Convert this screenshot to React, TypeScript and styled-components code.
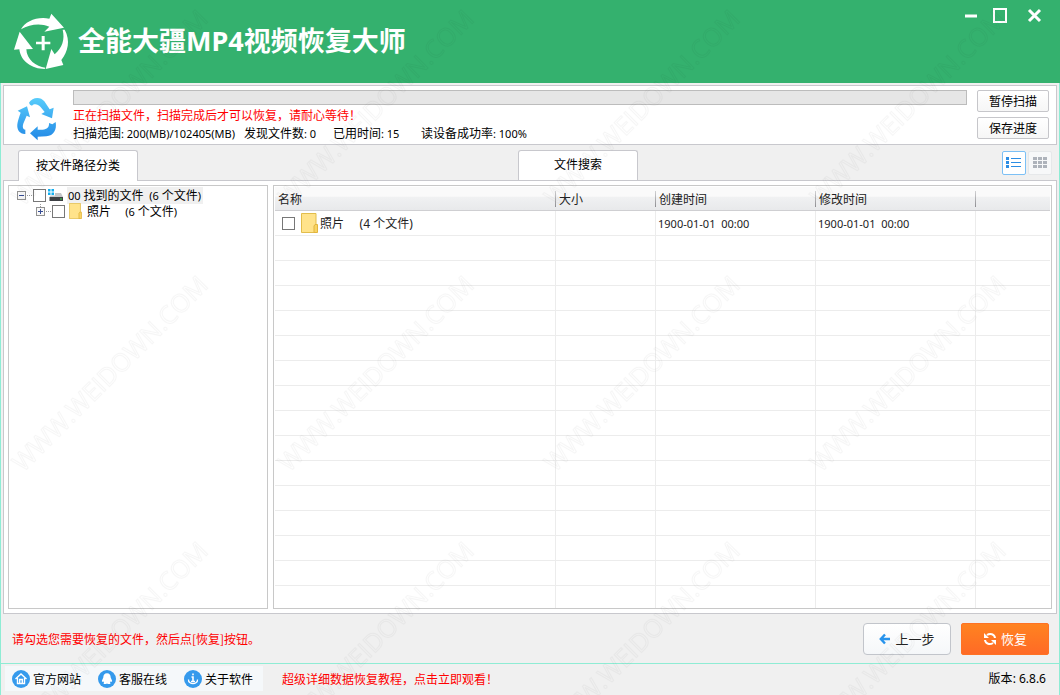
import React from "react";
import styled, { createGlobalStyle } from "styled-components";

const GlobalStyle = createGlobalStyle`
  * { box-sizing: border-box; }
  body {
    margin: 0;
    background: #f0f0f0;
    color: #000;
    font: 12px/16px "Noto Sans CJK SC", sans-serif;
  }
  button, input { font: inherit; margin: 0; padding: 0; }
`;

const Window = styled.div`
  position: relative;
  display: flex;
  flex-direction: column;
  height: 100vh;
  min-height: 480px;
  overflow: hidden;
`;

const TitleBar = styled.header`
  display: flex;
  justify-content: space-between;
  height: 83px;
  flex: none;
  padding: 0 15px 0 9px;
  background: #34b16e;
  color: #fff;
`;

const Brand = styled.div`
  display: flex;
  align-items: center;
  gap: 5px;
  padding-bottom: 2px;
`;

const Title = styled.h1`
  margin: 0;
  font: bold 27px/40px "Noto Sans", "Noto Sans CJK SC", sans-serif;
`;

const WindowControls = styled.div`
  display: flex;
  gap: 13px;
  padding-top: 6px;
`;

const ControlButton = styled.button`
  display: flex;
  align-items: center;
  justify-content: center;
  width: 20px;
  height: 20px;
  border: 0;
  background: none;
  color: #fff;
`;

const Frame = styled.div`
  display: flex;
  flex: 1;
  flex-direction: column;
  min-height: 0;
  border: solid #8eecd4;
  border-width: 0 1px;
`;

const ScanPanel = styled.section`
  display: flex;
  flex: none;
  margin: 2px 2px 0;
  padding: 4px 7px 0 6px;
  border: 1px solid #c8c8cd;
  background: #fff;
`;

const ScanInfo = styled.div`
  flex: 1;
  min-width: 0;
  margin-left: 9px;
`;

const ScanIcon = styled.svg`
  flex: none;
  width: 54px;
  height: 54px;
`;

const ScanProgress = styled.progress`
  display: block;
  width: 100%;
  height: 15px;
  margin-bottom: 1px;
  border: 1px solid #bcbcbc;
  background: #e6e6e6;
  appearance: none;
  &::-webkit-progress-bar { background: #e6e6e6; }
  &::-webkit-progress-value { background: #34b16e; }
`;

const Notice = styled.p`
  margin: 0;
  color: #f00;
  line-height: 18px;
`;

const Stats = styled.div`
  display: grid;
  grid-template-columns: 171px 89px 88px 1fr;
  line-height: 18px;
  white-space: nowrap;
`;

const Latin = styled.span<{ $size?: number }>`
  font-family: "Noto Sans", sans-serif;
  font-size: ${(p) => p.$size ?? 11}px;
  white-space: pre;
`;

const ScanButtons = styled.div`
  display: flex;
  flex-direction: column;
  gap: 5px;
  margin-left: 10px;
`;

const SmallButton = styled.button`
  width: 72px;
  height: 22px;
  border: 1px solid #c6c6ca;
  border-radius: 2px;
  background: linear-gradient(#fff, #f6f6f6);
  color: #000;
  line-height: 18px;
`;

const TabBar = styled.div`
  position: relative;
  display: flex;
  flex: none;
  margin: 5px 7px -1px 17px;
`;

const Tab = styled.button<{ $active?: boolean; $gap?: number }>`
  width: 120px;
  height: ${(p) => (p.$active ? 31 : 30)}px;
  margin-left: ${(p) => p.$gap ?? 0}px;
  padding-bottom: 3px;
  border: 1px solid #c8c8cd;
  border-bottom: 0;
  border-radius: 3px 3px 0 0;
  background: #fff;
  color: #000;
`;

const ViewSwitch = styled.div`
  display: flex;
  gap: 2px;
  margin: 1px 0 0 auto;
`;

const ViewButton = styled.button<{ $active?: boolean }>`
  display: flex;
  align-items: center;
  justify-content: center;
  width: 24px;
  height: 24px;
  border: 1px solid ${(p) => (p.$active ? "#7cc0f5" : "#e6e8ea")};
  border-radius: 2px;
  background: ${(p) => (p.$active ? "#fff" : "#f7f8f9")};
  color: ${(p) => (p.$active ? "#2b8de4" : "#aeb3bb")};
`;

const Workspace = styled.main`
  display: flex;
  flex: 1;
  gap: 5px;
  min-height: 0;
  margin: 0 2px;
  padding: 4px;
  border: 1px solid #c8c8cd;
  background: #fff;
`;

const TreePane = styled.nav`
  flex: none;
  width: 260px;
  padding: 1px 8px;
  border: 1px solid #c8c8c8;
  overflow: hidden;
`;

const TreeRow = styled.div<{ $level: number }>`
  display: flex;
  align-items: center;
  height: 16px;
  padding-left: ${(p) => p.$level * 19}px;
  white-space: nowrap;
`;

const Expander = styled.button`
  display: flex;
  flex: none;
  width: 16px;
  height: 15px;
  border: 0;
  background: none;
`;

const Check = styled.input`
  flex: none;
  width: 13px;
  height: 13px;
  border: 1px solid #777;
  background: #fff;
  appearance: none;
`;

const TreeLabel = styled.label`
  display: flex;
  align-items: center;
  gap: 4px;
  height: 16px;
`;

const TreeName = styled.span<{ $selected?: boolean }>`
  padding: 0 2px 0 1px;
  background: ${(p) => (p.$selected ? "#f0f0f0" : "transparent")};
  white-space: pre;
`;

const RowIcon = styled.svg<{ $gap: number }>`
  flex: none;
  margin-left: ${(p) => p.$gap}px;
`;

const ListPane = styled.section`
  flex: 1;
  min-width: 0;
  padding: 1px;
  border: 1px solid #c8c8c8;
  overflow: hidden;
`;

const FileTable = styled.table`
  width: 100%;
  border-collapse: separate;
  border-spacing: 0;
  table-layout: fixed;
  color: #222;
`;

const HeadCell = styled.th`
  height: 24px;
  padding: 0 3px;
  border-bottom: 1px solid #cfcfd2;
  background:
    linear-gradient(#d0d0d2, #8e8e92) right 4px / 1px 16px no-repeat,
    linear-gradient(#fafafa 0 40%, #f0f1f2 45%, #e8e9eb);
  font-weight: normal;
  text-align: left;
  &:last-child {
    background: linear-gradient(#fafafa 0 40%, #f0f1f2 45%, #e8e9eb);
  }
`;

const Cell = styled.td`
  height: 25px;
  padding: 0 2px;
  border: solid #ececec;
  border-width: 0 1px 1px 0;
  white-space: pre;
  &:last-child { border-right: 0; }
`;

const FileName = styled.label`
  display: flex;
  align-items: center;
  gap: 2px;
  padding-left: 5px;
`;

const NameText = styled.span`
  white-space: pre;
`;

const ActionBar = styled.div`
  display: flex;
  flex: none;
  align-items: center;
  gap: 10px;
  height: 49px;
  padding: 0 10px 0 11px;
`;

const ActionHint = styled(Notice)`
  flex: 1;
`;

const ActionButton = styled.button<{ $primary?: boolean }>`
  display: flex;
  align-items: center;
  justify-content: center;
  gap: 4px;
  width: 88px;
  height: 32px;
  border: 1px solid ${(p) => (p.$primary ? "#ff7224" : "#c2c5cb")};
  border-radius: ${(p) => (p.$primary ? 2 : 4)}px;
  background: ${(p) =>
    p.$primary ? "linear-gradient(#ff8320, #ff6a26)" : "linear-gradient(#fff, #f5f7f9)"};
  color: ${(p) => (p.$primary ? "#fff" : "#222")};
  font-size: 13px;
`;

const Footer = styled.footer`
  display: flex;
  flex: none;
  align-items: center;
  height: 32px;
  padding: 0 13px 2px 4px;
  border-top: 1px solid #8eecd4;
`;

const FooterLinks = styled.div`
  display: flex;
  gap: 17px;
  align-items: center;
  height: 25px;
  margin-right: 19px;
  padding: 0 10px 0 7px;
  background: #f5f8fa;
`;

const FooterLink = styled.a`
  display: flex;
  align-items: center;
  gap: 3px;
  color: #000;
  text-decoration: none;
`;

const TutorialLink = styled.a`
  color: #f00;
  text-decoration: none;
`;

const Version = styled.span`
  margin-left: auto;
`;

const Watermark = styled.svg`
  position: absolute;
  inset: 0;
  width: 100%;
  height: 100%;
  pointer-events: none;
`;

const Logo = () => (
  <svg width="64" height="64" viewBox="30 24 192 192" fill="#fff" aria-hidden="true">
    <path d="M66 85C78 61 116 45 151 53L157 38L195 80L136 92L151 77C123 65 92 70 66 85Z" />
    <path d="M197 86C215 119 207 151 187 177L193 192L140 204L157 144L167 160C190 139 198 116 191 86Z" />
    <path d="M62 92L102 144L82 145C83 176 111 197 139 200L137 204C99 204 65 181 61 145L45 146Z" />
    <path d="M128 105H137V122H154V130H137V148H128V130H111V122H128Z" />
  </svg>
);

const RecycleIcon = () => (
  <ScanIcon viewBox="0 0 162 162" aria-hidden="true">
    <defs>
      <linearGradient id="recycle" gradientUnits="userSpaceOnUse" x1="0" y1="24" x2="0" y2="150">
        <stop offset="0" stopColor="#57ccfb" />
        <stop offset="1" stopColor="#2389e6" />
      </linearGradient>
    </defs>
    <g fill="url(#recycle)">
      <path d="M57 38C66 22 91 18 103 34L119 58L131 53L126 85L94 72L104 66L91 50C84 42 72 40 66 47L60 44Z" />
      <path d="M51 49L60 82L50 77L42 96C36 108 38 119 46 119V132C30 133 20 120 22 103C23 94 27 82 32 68L23 62Z" />
      <path d="M60 130L83 109V119H98C111 118 118 112 117 99L127 103L137 96C141 119 131 137 109 139L83 140V151Z" />
    </g>
  </ScanIcon>
);

const ExpandMark = ({ open }: { open?: boolean }) => (
  <svg width="16" height="15" shapeRendering="crispEdges" aria-hidden="true">
    <rect x="0.5" y="3.5" width="8" height="8" fill="#f8f8f8" stroke="#919191" />
    <path d={open ? "M2 7.5H7" : "M2 7.5H7M4.500 5V10"} stroke="#354b94" />
    <path d="M10 7.500H16" stroke="#999" strokeDasharray="1 1" />
    {!open && <path d="M4.500 0V3" stroke="#999" strokeDasharray="1 1" />}
  </svg>
);

const DriveIcon = () => (
  <RowIcon $gap={2} width="15" height="16" viewBox="0 0 15 16" aria-hidden="true">
    <path d="M0 2h2.500v2.500H0zM3.500 2H6v2.500H3.500zM0 5.500h2.500V8H0zM3.500 5.500H6V8H3.500z" fill="#12aef0" />
    <path d="M7 6H13L15 10H1.500L2.500 8.500H7Z" fill="#c4c6c9" />
    <path d="M1.500 10H15V14H1.500Z" fill="#3d4044" />
    <path d="M12 11.500h2v1h-2z" fill="#3adf52" />
  </RowIcon>
);

const FolderIcon = ({ width, height, gap }: { width: number; height: number; gap: number }) => (
  <RowIcon
    $gap={gap}
    width={width}
    height={height}
    viewBox="0 0 17 20"
    preserveAspectRatio="none"
    aria-hidden="true"
  >
    <path d="M.5.5H15V19.500H.5Z" fill="#ffe38b" stroke="#e2bd4b" />
    <path d="M14 11.500H16.500V19.500H13V13Z" fill="#f8d465" stroke="#e2b53d" />
  </RowIcon>
);

const footerGlyphs: Record<string, React.ReactNode> = {
  home: (
    <g fill="none" stroke="#fff" strokeWidth="1.400">
      <path d="M3.500 9L9 4L14.500 9M5.500 8V13.500H12.500V8" />
      <path d="M7.700 13V9.500H10.300V13" />
    </g>
  ),
  chat: <path d="M9 3.300C6.500 3.300 5.300 5 5.300 7.500L4 10.500C3.700 12 4.500 12 5.200 11.200L6 12.700L5.500 14H8L9 13.600L10 14H12.500L12 12.700L12.800 11.200C13.500 12 14.300 12 14 10.500L12.700 7.500C12.700 5 11.500 3.300 9 3.300Z" fill="#fff" />,
  info: (
    <g fill="none" stroke="#fff" strokeWidth="1.600">
      <path d="M9 3.500V5.200M7.500 7H9V11.500M7 11.500H11" />
      <path d="M4.500 9.500C4 15 14 15 13.500 9.500" strokeWidth="1.300" />
    </g>
  ),
};

const RoundIcon = ({ glyph }: { glyph: string }) => (
  <svg width="18" height="18" viewBox="0 0 18 18" aria-hidden="true">
    <circle cx="9" cy="9" r="9" fill="#359aec" />
    {footerGlyphs[glyph]}
  </svg>
);

const stats = [
  ["扫描范围", "200(MB)/102405(MB)"],
  ["发现文件数", "0"],
  ["已用时间", "15"],
  ["读设备成功率", "100%"],
];

const columns = ["名称", "大小", "创建时间", "修改时间", ""];
const columnWidths = ["281px", "100px", "160px", "160px", "auto"];
const links = [
  { label: "官方网站", glyph: "home" },
  { label: "客服在线", glyph: "chat" },
  { label: "关于软件", glyph: "info" },
];

export default function App() {
  return (
    <Window>
      <GlobalStyle />
      <TitleBar>
        <Brand>
          <Logo />
          <Title>全能大疆MP4视频恢复大师</Title>
        </Brand>
        <WindowControls>
          <ControlButton aria-label="最小化">
            <svg width="20" height="20"><path d="M6 10H18" stroke="currentColor" strokeWidth="3" /></svg>
          </ControlButton>
          <ControlButton aria-label="最大化">
            <svg width="20" height="20"><path d="M2 3H14V16H2Z" fill="none" stroke="currentColor" strokeWidth="2" /></svg>
          </ControlButton>
          <ControlButton aria-label="关闭">
            <svg width="20" height="20"><path d="M4 4L15 15M15 4L4 15" stroke="currentColor" strokeWidth="3" /></svg>
          </ControlButton>
        </WindowControls>
      </TitleBar>

      <Frame>
        <ScanPanel>
          <RecycleIcon />
          <ScanInfo>
            <ScanProgress value={0} max={100} aria-label="扫描进度" />
            <Notice>正在扫描文件，扫描完成后才可以恢复，请耐心等待！</Notice>
            <Stats>
              {stats.map(([name, value]) => (
                <span key={name}>
                  {name}<Latin>: {value}</Latin>
                </span>
              ))}
            </Stats>
          </ScanInfo>
          <ScanButtons>
            <SmallButton>暂停扫描</SmallButton>
            <SmallButton>保存进度</SmallButton>
          </ScanButtons>
        </ScanPanel>

        <TabBar>
          <Tab $active>按文件路径分类</Tab>
          <Tab $gap={380}>文件搜索</Tab>
          <ViewSwitch>
            <ViewButton $active aria-label="列表视图">
              <svg width="16" height="12" fill="currentColor" shapeRendering="crispEdges">
                <path d="M0 0h3v3H0zM0 4h3v3H0zM0 8h3v3H0zM5 1h10v1H5zM5 5h10v1H5zM5 9h10v1H5z" />
              </svg>
            </ViewButton>
            <ViewButton aria-label="图标视图">
              <svg width="14" height="12" fill="currentColor" shapeRendering="crispEdges">
                <path d="M0 0h4v3H0zM5 0h4v3H5zM10 0h4v3h-4zM0 4h4v3H0zM5 4h4v3H5zM10 4h4v3h-4zM0 8h4v3H0zM5 8h4v3H5zM10 8h4v3h-4z" />
              </svg>
            </ViewButton>
          </ViewSwitch>
        </TabBar>

        <Workspace>
          <TreePane>
            <TreeRow $level={0}>
              <Expander aria-label="折叠"><ExpandMark open /></Expander>
              <Check type="checkbox" id="tree-root" />
              <TreeLabel htmlFor="tree-root">
                <DriveIcon />
                <TreeName $selected><Latin>00 </Latin>找到的文件<Latin>  (6 </Latin>个文件<Latin>)</Latin></TreeName>
              </TreeLabel>
            </TreeRow>
            <TreeRow $level={1}>
              <Expander aria-label="展开"><ExpandMark /></Expander>
              <Check type="checkbox" id="tree-photos" />
              <TreeLabel htmlFor="tree-photos">
                <FolderIcon width={13} height={16} gap={4} />
                <TreeName>照片<Latin>{"     (6 "}</Latin>个文件<Latin>)</Latin></TreeName>
              </TreeLabel>
            </TreeRow>
          </TreePane>

          <ListPane>
            <FileTable>
              <colgroup>
                {columnWidths.map((width, i) => <col key={i} style={{ width }} />)}
              </colgroup>
              <thead>
                <tr>{columns.map((name, i) => <HeadCell key={i}>{name}</HeadCell>)}</tr>
              </thead>
              <tbody>
                <tr>
                  <Cell>
                    <FileName>
                      <Check type="checkbox" />
                      <FolderIcon width={17} height={20} gap={4} />
                      <NameText>照片<Latin $size={12}>{"     (4 "}</Latin>个文件<Latin $size={12}>)</Latin></NameText>
                    </FileName>
                  </Cell>
                  <Cell />
                  <Cell><Latin>1900-01-01  00:00</Latin></Cell>
                  <Cell><Latin>1900-01-01  00:00</Latin></Cell>
                  <Cell />
                </tr>
                {Array.from({ length: 40 }, (_, row) => (
                  <tr key={row}>{columns.map((_, i) => <Cell key={i} />)}</tr>
                ))}
              </tbody>
            </FileTable>
          </ListPane>
        </Workspace>

        <ActionBar>
          <ActionHint>请勾选您需要恢复的文件，然后点[恢复]按钮。</ActionHint>
          <ActionButton>
            <svg width="12" height="12" fill="none" stroke="#2793ec" strokeWidth="2.400" aria-hidden="true">
              <path d="M11 6H2M6 1.500L1.800 6L6 10.500" />
            </svg>
            上一步
          </ActionButton>
          <ActionButton $primary>
            <svg width="14" height="14" fill="none" stroke="#fff" strokeWidth="2" aria-hidden="true">
              <path d="M4 3C7 1 11.500 2 12 6M10 11C7 13 2.500 12 2 8" />
              <path d="M1 1V6H6ZM13 13V8H8Z" fill="#fff" stroke="none" />
            </svg>
            恢复
          </ActionButton>
        </ActionBar>

        <Footer>
          <FooterLinks>
            {links.map((link) => (
              <FooterLink href="#" key={link.label}>
                <RoundIcon glyph={link.glyph} />
                {link.label}
              </FooterLink>
            ))}
          </FooterLinks>
          <TutorialLink href="#">超级详细数据恢复教程，点击立即观看！</TutorialLink>
          <Version>版本<Latin $size={12}>: 6.8.6</Latin></Version>
        </Footer>
      </Frame>

      <Watermark aria-hidden="true">
        <defs>
          <pattern id="mark" y="9" width="266" height="266" patternUnits="userSpaceOnUse">
            <text
              transform="translate(23 198) rotate(-45)"
              fontFamily="Open Sans, sans-serif"
              fontSize="25"
              fill="none"
              stroke="#000"
              strokeOpacity="0.035"
            >
              WWW.WEIDOWN.COM
            </text>
          </pattern>
        </defs>
        <rect width="100%" height="100%" fill="url(#mark)" />
      </Watermark>
    </Window>
  );
}
